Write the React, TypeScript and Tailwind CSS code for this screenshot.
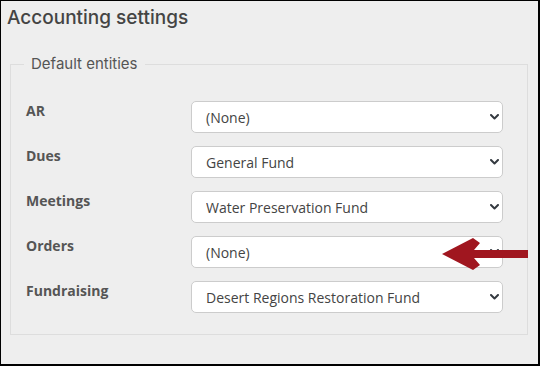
import React from 'react';

const rows = [
  { label: 'AR', value: '(None)' },
  { label: 'Dues', value: 'General Fund' },
  { label: 'Meetings', value: 'Water Preservation Fund' },
  { label: 'Orders', value: '(None)' },
  { label: 'Fundraising', value: 'Desert Regions Restoration Fund' },
];

const Chevron = () => (
  <svg
    className="pointer-events-none absolute right-[4px] top-1/2 -translate-y-1/2"
    width="9"
    height="6"
    viewBox="0 0 9 6"
    fill="none"
  >
    <path d="M1 1l3.5 3.5L8 1" stroke="#343a40" strokeWidth="2" strokeLinecap="round" strokeLinejoin="round" />
  </svg>
);

export default function App() {
  return (
    <div className="relative w-[540px] h-[366px] bg-[#eeeeee] border-l border-t border-r-2 border-b-2 border-black overflow-hidden">
      <h1
        className="pt-[3px] pl-[6px] text-[19px] leading-[28px] font-medium text-[#444444]"
        style={{ fontFamily: 'Inter, "Open Sans", sans-serif' }}
      >
        Accounting settings
      </h1>

      <fieldset className="ml-[9px] mt-[22px] w-[518px] border border-[#dddddd] pl-[15px] pr-[23px] pt-[27px] pb-[21px]">
        <legend
          className="-ml-[2px] px-[7px] text-[15px] leading-[20px] text-[#555555]"
          style={{ fontFamily: 'Inter, "Open Sans", sans-serif' }}
        >
          Default entities
        </legend>
        <div className="flex flex-col gap-[13px]" style={{ fontFamily: '"Open Sans", sans-serif' }}>
          {rows.map((row) => (
            <div key={row.label} className="flex items-start">
              <label className="w-[165px] text-[14px] leading-[20px] font-bold text-[#555555]">{row.label}</label>
              <div className="relative w-[312px]">
                <select
                  defaultValue={row.value}
                  className="block w-full h-[32px] appearance-none rounded-[5px] border border-[#cccccc] bg-white pl-[14px] pr-6 text-[14px] text-[#444444] outline-none"
                >
                  <option>{row.value}</option>
                </select>
                <Chevron />
              </div>
            </div>
          ))}
        </div>
      </fieldset>

      <svg className="absolute left-[439px] top-[236px]" width="90" height="34" viewBox="0 0 90 34">
        <path d="M88 13 H34 L40 6 L33 1 L2 17 L33 33 L40 28 L34 21 H88 Z" fill="#a0161f" />
      </svg>
    </div>
  );
}
